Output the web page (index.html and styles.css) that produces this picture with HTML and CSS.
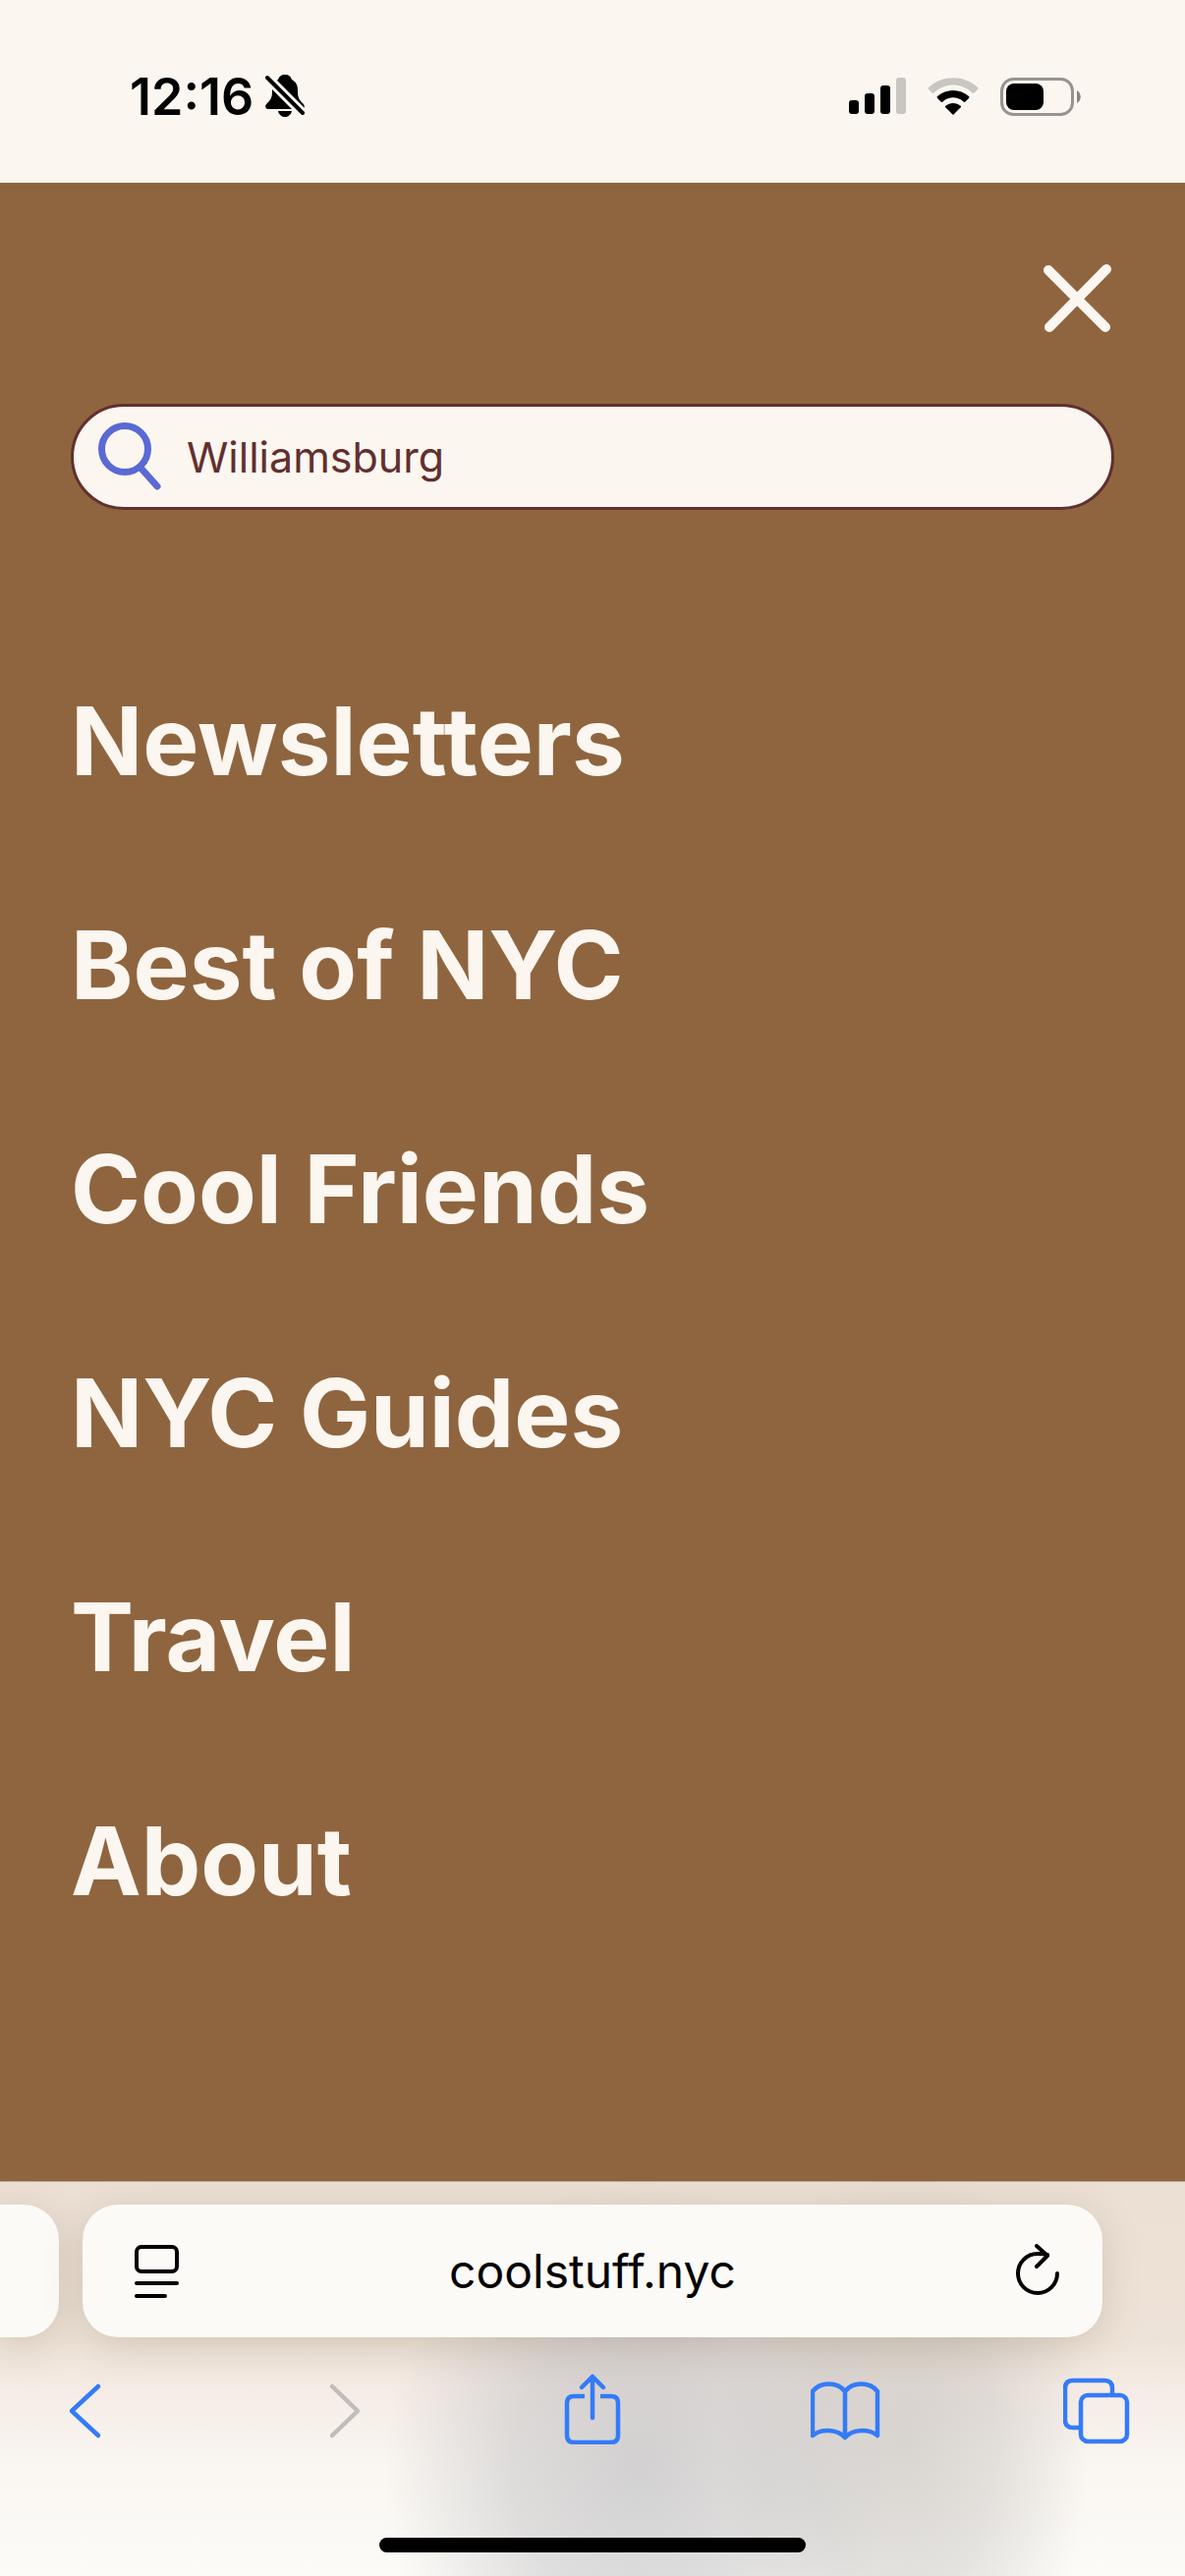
FILE: index.html
```html
<!DOCTYPE html>
<html lang="en">
  <head>
    <meta charset="UTF-8" />
    <meta name="viewport" content="width=device-width, initial-scale=1.0" />
    <title>coolstuff.nyc</title>
    <link rel="stylesheet" href="styles.css">
  </head>
  <body>
    <!-- Status bar -->
    <header class="status-bar">
      <div class="status-left">
        <span class="time">12:16</span>
        <svg class="bell" width="40" height="44" viewBox="0 0 40 44" aria-hidden="true">
          <path d="M20 0c-4 0-6 2-7 5C8 8 7 12 7 17c0 7-2 9-5 12-3 3-2 6 1 6h34c3 0 4-3 1-6-3-3-5-5-5-12 0-6-1-9-6-12-1-3-3-5-7-5z" />
          <path d="M13 37h14c-1 4-4 6-7 6s-6-2-7-6z" />
          <path class="bell-gap" d="M0 1L41 42" />
          <path class="bell-slash" d="M2 3L38 39" />
        </svg>
      </div>
      <div class="status-right">
        <svg width="58" height="38" viewBox="0 0 58 38" aria-hidden="true">
          <rect x="0" y="23" width="10" height="14" rx="3" />
          <rect x="16" y="16" width="10" height="21" rx="3" />
          <rect x="32" y="8" width="10" height="29" rx="3" />
          <rect class="faded" x="48" y="0" width="10" height="37" rx="3" />
        </svg>
        <svg width="52" height="38" viewBox="0 0 52 38" aria-hidden="true">
          <path class="faded" d="M1 10C15-3 37-3 51 10c1 1 0 1 0 2l-4 4c-1 0-1 0-2-1-11-10-27-10-38 0-1 1-1 1-2 1l-4-4c0-1-1-1 0-2z" />
          <path d="M10 19c9-8 23-8 32 0 1 1 0 1 0 2l-4 4c-1 0-1 0-2-1-6-5-14-5-20 0-1 1-1 1-2 1l-4-4c0-1-1-1 0-2z" />
          <path d="M18 29c5-4 11-4 16 0 0 1 0 1-1 2l-7 7-7-7c-1-1-1-1-1-2z" />
        </svg>
        <svg width="82" height="39" viewBox="0 0 82 39" aria-hidden="true">
          <rect class="battery-shell" x="1.5" y="1.5" width="72" height="36" rx="12" />
          <rect x="6" y="6" width="38" height="27" rx="8" />
          <path class="battery-tip" d="M78 13c5 3 5 10 0 13z" />
        </svg>
      </div>
    </header>

    <!-- Full screen menu -->
    <main class="menu">
      <div class="menu-top">
        <button class="close" type="button" aria-label="Close menu">
          <svg width="72" height="72" viewBox="0 0 72 72" aria-hidden="true">
            <path d="M5 7L63 65M64 6L6 65" />
          </svg>
        </button>
      </div>

      <form class="search">
        <label for="search" aria-label="Search">
          <svg width="66" height="70" viewBox="0 0 66 70" aria-hidden="true">
            <circle cx="27" cy="27" r="23.5" />
            <path d="M43 46L60 65" />
          </svg>
        </label>
        <input type="text" id="search" value="Williamsburg" />
      </form>

      <nav>
        <ul class="links">
          <li><a href="#">Newsletters</a></li>
          <li><a href="#">Best of NYC</a></li>
          <li><a href="#">Cool Friends</a></li>
          <li><a href="#">NYC Guides</a></li>
          <li><a href="#">Travel</a></li>
          <li><a href="#">About</a></li>
        </ul>
      </nav>
    </main>

    <!-- Browser controls -->
    <footer class="browser">
      <div class="tabs">
        <div class="previous-tab"></div>
        <div class="address-bar">
          <button type="button" aria-label="Page menu">
            <svg width="56" height="56" viewBox="0 0 56 56" aria-hidden="true">
              <rect x="12" y="3" width="41" height="25" rx="5" />
              <path d="M12 40H53M12 53H41" />
            </svg>
          </button>
          <input class="address" type="text" aria-label="Address" value="coolstuff.nyc" />
          <button type="button" aria-label="Reload">
            <svg width="56" height="56" viewBox="0 0 56 56" aria-hidden="true">
              <path d="M53 30A20 20 0 1 1 33 10C36 10 39 10 43 11" />
              <path d="M32 2L43 12L32 23" />
            </svg>
          </button>
        </div>
      </div>

      <div class="toolbar">
        <button type="button" aria-label="Back">
          <svg width="72" height="72" viewBox="0 0 72 72" aria-hidden="true">
            <path d="M48 13L21 38L48 63" />
          </svg>
        </button>
        <button type="button" aria-label="Forward" disabled>
          <svg width="72" height="72" viewBox="0 0 72 72" aria-hidden="true">
            <path d="M28 13L54 38L28 63" />
          </svg>
        </button>
        <button type="button" aria-label="Share">
          <svg width="72" height="72" viewBox="0 0 72 72" aria-hidden="true">
            <path class="butt" d="M28 23H17Q10 23 10 30V63Q10 70 17 70H55Q62 70 62 63V30Q62 23 55 23H44" />
            <path d="M36 45V3M25 14L36 3L47 14" />
          </svg>
        </button>
        <button type="button" aria-label="Bookmarks">
          <svg width="72" height="72" viewBox="0 0 72 72" aria-hidden="true">
            <path d="M35 65V18C27 8 10 8 2 18V63C10 56 27 56 35 65C43 56 60 56 68 63V18C60 8 43 8 35 18" />
          </svg>
        </button>
        <button type="button" aria-label="Tabs">
          <svg width="72" height="72" viewBox="0 0 72 72" aria-hidden="true">
            <path class="butt" d="M16 55H10Q2 55 2 47V15Q2 7 10 7H42Q50 7 50 15V22" />
            <rect x="18" y="22" width="47" height="47" rx="7" />
          </svg>
        </button>
      </div>

      <div class="home-indicator"></div>
    </footer>
  </body>
</html>
```

FILE: styles.css
```css
* {
  box-sizing: border-box;
}
body {
  display: flex;
  flex-direction: column;
  min-height: 100vh;
  margin: 0;
  font-family: Inter, "Liberation Sans", sans-serif;
  background-color: #fcf6f0;
  color: #000;
}
svg {
  display: block;
}
button {
  padding: 0;
  border: none;
  background: none;
  cursor: pointer;
}
input {
  min-width: 0;
  padding: 0;
  border: none;
  background: none;
  font-family: inherit;
  outline: none;
}

/* Status bar */
.status-bar {
  display: flex;
  justify-content: space-between;
  align-items: center;
  height: 186px;
  padding: 10px 106px 0 132px;
}
.status-left {
  display: flex;
  align-items: center;
  gap: 12px;
}
.status-right {
  display: flex;
  align-items: center;
  gap: 22px;
}
.time {
  font-size: 52px;
  font-weight: 600;
}
.bell-gap,
.bell-slash {
  stroke: #fcf6f0;
  stroke-width: 10;
}
.bell-slash {
  stroke: #000;
  stroke-width: 4;
  stroke-linecap: round;
}
.faded {
  fill: #c9c5c0;
}
.battery-shell {
  fill: none;
  stroke: #979390;
  stroke-width: 3;
}
.battery-tip {
  fill: #888480;
}

/* Menu */
.menu {
  flex: 1;
  padding: 82px 72px 72px;
  background-color: #8f653f;
}
.menu-top {
  display: flex;
  justify-content: flex-end;
}
.close svg {
  fill: none;
  stroke: #fcf6f0;
  stroke-width: 10;
  stroke-linecap: round;
}
.search {
  display: flex;
  align-items: center;
  gap: 24px;
  height: 108px;
  margin-top: 71px;
  padding: 0 40px 0 25px;
  border: 3px solid #61302f;
  border-radius: 54px;
  background-color: #fcf6f0;
}
.search svg {
  fill: none;
  stroke: #5a69d4;
  stroke-width: 7;
  stroke-linecap: round;
}
.search input {
  flex: 1;
  font-size: 43px;
  color: #61302f;
}
.links {
  display: flex;
  flex-direction: column;
  gap: 112px;
  margin: 177px 0 0;
  padding: 0;
  list-style: none;
}
.links a {
  display: block;
  font-size: 96px;
  font-weight: 700;
  line-height: 116px;
  color: #fcf6f0;
  text-decoration: none;
}

/* Browser controls */
.browser {
  padding: 23px 0 24px;
  border-top: 1px solid #b5afaa;
  background:
    radial-gradient(ellipse 260px 290px at 650px 290px, rgba(186, 186, 189, 0.62), rgba(188, 188, 191, 0.45) 50%, rgba(200, 200, 200, 0)),
    radial-gradient(ellipse 190px 290px at 920px 270px, rgba(190, 186, 182, 0.55), rgba(193, 190, 187, 0.4) 50%, rgba(200, 200, 200, 0)),
    linear-gradient(#ecdfd4, #eee3d8 40%, #f5ece6 53%, #faf6f1 72%, #fcfbf8);
  overflow: hidden;
}
.tabs {
  display: flex;
  gap: 24px;
  padding-right: 84px;
}
.previous-tab,
.address-bar {
  height: 135px;
  background-color: #fcfaf7;
  box-shadow: 0 8px 40px rgba(100, 80, 50, 0.2);
}
.previous-tab {
  width: 60px;
  border-radius: 0 36px 36px 0;
}
.address-bar {
  flex: 1;
  display: flex;
  align-items: center;
  padding: 0 43px;
  border-radius: 36px;
}
.address-bar svg {
  fill: none;
  stroke: #000;
  stroke-width: 4;
  stroke-linecap: round;
  stroke-linejoin: round;
}
.address {
  flex: 1;
  font-size: 48px;
  text-align: center;
}
.toolbar {
  display: flex;
  justify-content: space-between;
  margin-top: 37px;
  padding: 0 52px;
}
.toolbar svg {
  fill: none;
  stroke: #347bf7;
  stroke-width: 4.5;
  stroke-linecap: round;
  stroke-linejoin: round;
}
.toolbar .butt {
  stroke-linecap: butt;
}
.toolbar button:disabled svg {
  stroke: #bfbcb9;
}
.home-indicator {
  width: 36%;
  height: 15px;
  margin: 95px auto 0;
  border-radius: 8px;
  background-color: #000;
}
```
